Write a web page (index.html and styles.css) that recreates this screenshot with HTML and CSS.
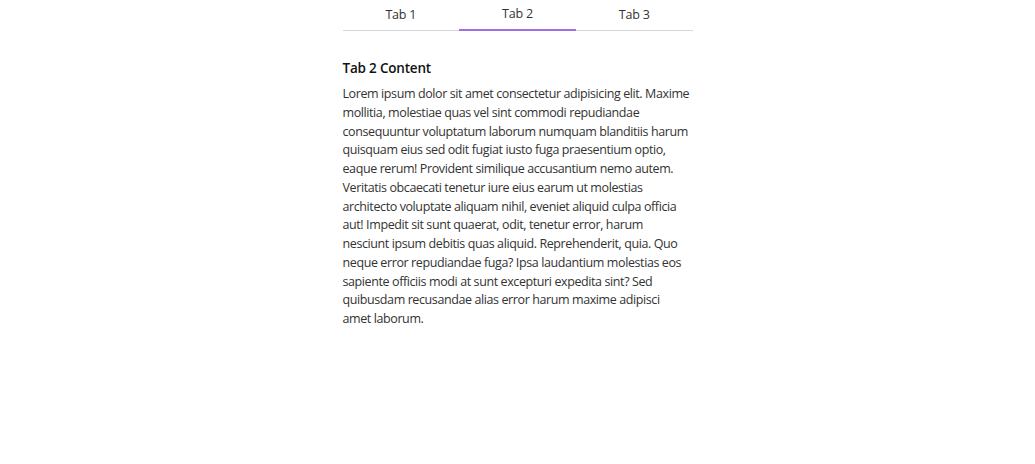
FILE: index.html
```html
<!DOCTYPE html>
<html lang="en">
<head>
    <meta charset="UTF-8">
    <meta name="viewport" content="width=device-width, initial-scale=1.0">
    <title>Tabs</title>
    <link rel="stylesheet" href="styles.css">
</head>
<body>

<div class="tabs">
    <div class="tab-list">
        <button class="tab">Tab 1</button>
        <button class="tab active">Tab 2</button>
        <button class="tab">Tab 3</button>
    </div>

    <div class="tab-panel">
        <h3 class="panel-title">Tab 2 Content</h3>
        <p class="panel-text">Lorem ipsum dolor sit amet consectetur adipisicing elit. Maxime mollitia, molestiae quas vel sint commodi repudiandae consequuntur voluptatum laborum numquam blanditiis harum quisquam eius sed odit fugiat iusto fuga praesentium optio, eaque rerum! Provident similique accusantium nemo autem. Veritatis obcaecati tenetur iure eius earum ut molestias architecto voluptate aliquam nihil, eveniet aliquid culpa officia aut! Impedit sit sunt quaerat, odit, tenetur error, harum nesciunt ipsum debitis quas aliquid. Reprehenderit, quia. Quo neque error repudiandae fuga? Ipsa laudantium molestias eos sapiente officiis modi at sunt excepturi expedita sint? Sed quibusdam recusandae alias error harum maxime adipisci amet laborum.</p>
    </div>
</div>

</body>
</html>
```

FILE: styles.css
```css
body {
    margin: 0;
    background-color: #fff;
    font-family: "Open Sans", "Noto Sans", sans-serif;
    color: #333;
}

.tabs {
    width: 350px;
    margin: 0 auto;
}

.tab-list {
    display: flex;
    border-bottom: 1px solid #d4d6dc;
}

.tab {
    flex: 1;
    background: none;
    border: none;
    border-bottom: 2px solid transparent;
    margin-bottom: -1px;
    padding: 6px 0 6px;
    font-family: inherit;
    font-size: 12.5px;
    letter-spacing: -0.2px;
    color: #333;
    cursor: pointer;
}

.tab.active {
    border-bottom-color: #9f6fe6;
    padding-top: 5px;
    padding-bottom: 7px;
}

.tab-panel {
    padding-top: 28px;
}

.panel-title {
    margin: 0 0 8px;
    font-size: 13.5px;
    font-weight: 600;
    letter-spacing: -0.2px;
    color: #111;
}

.panel-text {
    margin: 0;
    padding-right: 2px;
    font-size: 12.5px;
    letter-spacing: -0.4px;
    line-height: 18.75px;
}
```
